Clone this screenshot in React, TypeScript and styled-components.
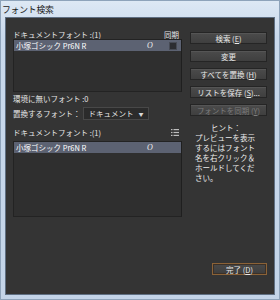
import React from 'react'
import styled, { createGlobalStyle } from 'styled-components'

const GlobalStyle = createGlobalStyle`
  html, body {
    margin: 0;
    padding: 0;
    width: 280px;
    height: 300px;
    overflow: hidden;
    background: #c6d7ea;
  }
  * {
    box-sizing: border-box;
  }
`

const Window = styled.div`
  width: 280px;
  height: 300px;
  display: flex;
  flex-direction: column;
  background: linear-gradient(180deg, #dde8f4 0%, #c9d9ec 12%, #c3d4e8 100%);
  border: 1px solid #8ea3ba;
  font-family: 'Noto Sans CJK JP', 'Noto Sans', sans-serif;
`

const TitleBar = styled.div`
  height: 16px;
  display: flex;
  align-items: center;
  padding-left: 1px;
  font-size: 8.8px;
  color: #1d1d1d;
  letter-spacing: -0.2px;
`

const Body = styled.div`
  flex: 1;
  margin: 0 4px 4px 4px;
  border: 1px solid #5f6f82;
  background: #343434;
  display: flex;
  gap: 8px;
  padding: 11px 0 19px 7px;
  color: #e6e6e6;
  font-size: 7.5px;
`

const LeftColumn = styled.div`
  width: 169px;
  display: flex;
  flex-direction: column;
`

const RightColumn = styled.div`
  width: 77px;
  display: flex;
  flex-direction: column;
  padding-top: 3px;
`

const LabelRow = styled.div<{ $mt?: number }>`
  height: 10px;
  margin-top: ${({ $mt }) => $mt ?? 0}px;
  display: flex;
  align-items: center;
  justify-content: space-between;
  padding-right: 3px;
  white-space: nowrap;
`

const ListBox = styled.div<{ $h: number; $mt?: number }>`
  height: ${({ $h }) => $h}px;
  margin-top: ${({ $mt }) => $mt ?? 0}px;
  background: #2f2f2f;
  border: 1px solid #232323;
  border-right-color: #1f1f1f;
`

const SelectedRow = styled.div`
  height: 11px;
  background: #5c6272;
  display: flex;
  align-items: center;
  padding-left: 2px;
  color: #ffffff;
  white-space: nowrap;
`

const FontName = styled.span`
  flex: 1;
`

const OpenTypeMark = styled.span`
  width: 22px;
  font-family: 'Liberation Serif', serif;
  font-style: italic;
  font-size: 8px;
  color: #f0f0f0;
`

const SyncBox = styled.span`
  width: 8px;
  height: 8px;
  margin-right: 4px;
  background: #2c2d31;
  border: 1px solid #474b55;
`

const Spacer = styled.span`
  width: 12px;
`

const ReplaceRow = styled.div`
  margin-top: 4px;
  height: 13px;
  display: flex;
  align-items: center;
  gap: 2px;
  white-space: nowrap;
`

const Dropdown = styled.div`
  width: 66px;
  height: 13px;
  display: flex;
  align-items: center;
  justify-content: space-between;
  padding: 0 4px 0 5px;
  background: #2b2b2b;
  border: 1px solid #484848;
`

const Caret = styled.span`
  font-size: 5px;
  color: #d8d8d8;
`

const Button = styled.div<{ $disabled?: boolean }>`
  height: 12px;
  margin-bottom: 6px;
  display: flex;
  align-items: center;
  justify-content: center;
  white-space: nowrap;
  background: linear-gradient(180deg, #4b4b4b 0%, #3f3f3f 100%);
  border: 1px solid #252525;
  box-shadow: inset 0 1px 0 #555555;
  color: ${({ $disabled }) => ($disabled ? '#7c7c7c' : '#e8e8e8')};
`

const Key = styled.span`
  text-decoration: underline;
`

const Hint = styled.div`
  margin-top: 1px;
  padding-left: 5px;
  line-height: 10px;
  color: #ececec;
`

const HintTitle = styled.div`
  text-align: center;
  padding-right: 10px;
`

const DoneButton = styled(Button)`
  margin-top: auto;
  margin-bottom: 0;
  margin-left: 22px;
  width: 55px;
  border: 1px solid #8b6237;
  box-shadow: inset 0 0 0 1px #3a3028;
  background: linear-gradient(180deg, #4a4a4a 0%, #3d3d3d 100%);
`

const ListIcon = () => (
  <svg width="8" height="7" viewBox="0 0 8 7">
    <rect x="0" y="0" width="1.5" height="1.2" fill="#bdbdbd" />
    <rect x="2.5" y="0" width="5.5" height="1.2" fill="#bdbdbd" />
    <rect x="0" y="2.9" width="1.5" height="1.2" fill="#bdbdbd" />
    <rect x="2.5" y="2.9" width="5.5" height="1.2" fill="#bdbdbd" />
    <rect x="0" y="5.8" width="1.5" height="1.2" fill="#bdbdbd" />
    <rect x="2.5" y="5.8" width="5.5" height="1.2" fill="#bdbdbd" />
  </svg>
)

const FontRow: React.FC<{ sync?: boolean }> = ({ sync }) => (
  <SelectedRow>
    <FontName>小塚ゴシック Pr6N R</FontName>
    <OpenTypeMark>O</OpenTypeMark>
    {sync ? <SyncBox /> : <Spacer />}
  </SelectedRow>
)

export default function App() {
  return (
    <>
      <GlobalStyle />
      <Window>
        <TitleBar>フォント検索</TitleBar>
        <Body>
          <LeftColumn>
            <LabelRow>
              <span>ドキュメントフォント :(1)</span>
              <span>同期</span>
            </LabelRow>
            <ListBox $h={53}>
              <FontRow sync />
            </ListBox>
            <LabelRow $mt={1}>
              <span>環境に無いフォント :0</span>
            </LabelRow>
            <ReplaceRow>
              <span>置換するフォント：</span>
              <Dropdown>
                <span>ドキュメント</span>
                <Caret>▼</Caret>
              </Dropdown>
            </ReplaceRow>
            <LabelRow $mt={7}>
              <span>ドキュメントフォント :(1)</span>
              <ListIcon />
            </LabelRow>
            <ListBox $h={76} $mt={4}>
              <FontRow />
            </ListBox>
          </LeftColumn>
          <RightColumn>
            <Button>
              検索 (<Key>E</Key>)
            </Button>
            <Button>変更</Button>
            <Button>
              すべてを置換 (<Key>H</Key>)
            </Button>
            <Button>
              リストを保存 (<Key>S</Key>)...
            </Button>
            <Button $disabled>
              フォントを同期 (<Key>Y</Key>)
            </Button>
            <Hint>
              <HintTitle>ヒント：</HintTitle>
              プレビューを表示
              <br />
              するにはフォント
              <br />
              名を右クリック＆
              <br />
              ホールドしてくだ
              <br />
              さい。
            </Hint>
            <DoneButton>
              完了 (<Key>D</Key>)
            </DoneButton>
          </RightColumn>
        </Body>
      </Window>
    </>
  )
}
